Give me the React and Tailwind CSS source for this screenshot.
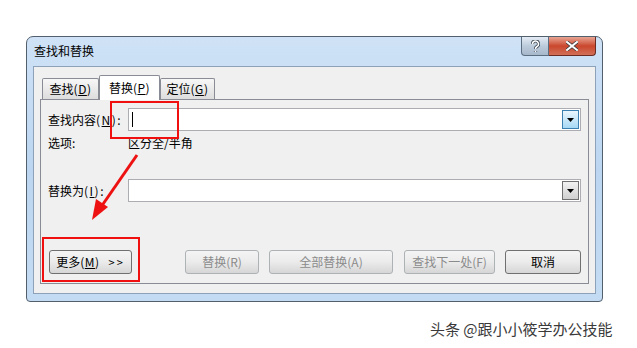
import React from 'react'

const cjk = { fontFamily: '"Noto Sans CJK SC", "Noto Sans", sans-serif' }

function Tab({ label, keyChar, active, w }) {
  return (
    <div
      className={
        (active
          ? 'relative z-10 -mb-px h-[25px] border border-b-0 border-[#898c95] bg-white '
          : 'mt-[3px] h-[21px] border border-b-0 border-[#898c95] bg-gradient-to-b from-[#f7f7f7] to-[#dddddd] ') +
        'flex items-center justify-center rounded-t-[2px] text-[12px] text-black ' +
        w
      }
    >
      {label}
      <span className="tracking-[0.5px]">
        (<span className="underline">{keyChar}</span>)
      </span>
    </div>
  )
}

function Combo({ focused }) {
  return (
    <div className="flex-1 h-[23px] border border-[#abadb3] bg-white flex items-center justify-between pl-[2px] pr-[1px]">
      <div className={focused ? 'h-[15px] w-px bg-black ml-[1px]' : ''} />
      <div
        className={
          focused
            ? 'h-[19px] w-[17px] border border-[#3c7fb1] bg-gradient-to-b from-[#eaf6fd] to-[#a7d9f5] flex items-center justify-center'
            : 'h-[19px] w-[17px] border border-[#707070] bg-gradient-to-b from-[#f2f2f2] to-[#d0d0d0] flex items-center justify-center'
        }
      >
        <svg width="7" height="4" viewBox="0 0 7 4">
          <path d="M0 0h7L3.5 4z" fill="#000" />
        </svg>
      </div>
    </div>
  )
}

function Btn({ children, disabled, className = '' }) {
  return (
    <div
      className={
        'h-[24px] rounded-[3px] border bg-gradient-to-b from-[#f4f4f4] via-[#ebebeb] to-[#d6d6d6] flex items-center justify-center text-[12px] ' +
        (disabled ? 'border-[#adb2b5] text-[#8b8b8b] ' : 'border-[#707070] text-black ') +
        className
      }
    >
      {children}
    </div>
  )
}

export default function App() {
  return (
    <div className="relative w-[637px] h-[348px] bg-white overflow-hidden pt-[36px] pl-[26px]" style={cjk}>
      <div className="w-[577px] h-[266px] border border-[#52606e] rounded-t-[7px] rounded-b-[4px] bg-gradient-to-b from-[#cfe2f6] via-[#bcd6f1] to-[#c4dcf3] flex flex-col">
        <div className="h-[29px] flex items-start justify-between pl-[7px] pr-[6px]">
          <div className="text-[12px] text-black pt-[5px]">查找和替换</div>
          <div className="flex">
            <div className="w-[28px] h-[19px] border border-[#5b6d80] border-t-0 rounded-bl-[4px] bg-gradient-to-b from-[#e4ecf5] via-[#bccbdb] to-[#a7b8cb] flex items-center justify-center">
              <svg width="9" height="13" viewBox="0 0 9 13">
                <path d="M1.5 4a3 3 0 1 1 4.2 2.7c-1 .6-1.2 1-1.2 2.3M4.5 11v1" stroke="#3d4a58" strokeWidth="3.2" fill="none" />
                <path d="M1.5 4a3 3 0 1 1 4.2 2.7c-1 .6-1.2 1-1.2 2.3M4.5 11v1" stroke="#fff" strokeWidth="1.6" fill="none" />
              </svg>
            </div>
            <div className="w-[47px] h-[19px] border border-[#6a2b22] border-t-0 border-l-0 rounded-br-[4px] bg-gradient-to-b from-[#e8a493] via-[#c9462c] to-[#d16f57] flex items-center justify-center">
              <svg width="12" height="10" viewBox="0 0 12 10">
                <path d="M1 1l10 8M11 1L1 9" stroke="#3a3a3a" strokeWidth="3.4" strokeLinecap="square" />
                <path d="M1 1l10 8M11 1L1 9" stroke="#fff" strokeWidth="2" strokeLinecap="square" />
              </svg>
            </div>
          </div>
        </div>
        <div className="mx-[6px] mb-[7px] flex-1 border border-[#8da2b8] bg-[#f0f0f0] px-[6px] pt-[8px] pb-[9px] flex flex-col">
          <div className="flex pl-[2px] items-end">
            <Tab label="查找" keyChar="D" w="w-[57px]" />
            <Tab label="替换" keyChar="P" active w="w-[61px]" />
            <Tab label="定位" keyChar="G" w="w-[55px]" />
          </div>
          <div className="flex-1 border border-[#898c95] bg-[#f0f0f0] px-[7px] pt-[8px] pb-[9px] flex flex-col">
            <div className="flex items-center gap-[6px]">
              <div className="w-[74px] text-[12px] text-black whitespace-nowrap">
                查找内容<span className="tracking-[1.5px]">(<span className="underline">N</span>):</span>
              </div>
              <Combo focused />
            </div>
            <div className="flex items-center mt-[2px] h-[20px] text-[12px] text-black">
              <div className="w-[80px]">选项:</div>
              <div>区分全/半角</div>
            </div>
            <div className="flex items-center gap-[6px] mt-[26px]">
              <div className="w-[74px] text-[12px] text-black whitespace-nowrap">
                替换为<span className="tracking-[1.5px]">(<span className="underline">I</span>):</span>
              </div>
              <Combo />
            </div>
            <div className="flex-1" />
            <div className="flex items-center pl-[1px]">
              <Btn className="w-[83px] gap-[9px]">
                <span>
                  更多<span className="tracking-[0.5px]">(<span className="underline">M</span>)</span>
                </span>
                <span className="text-[11px] tracking-[2px]">&gt;&gt;</span>
              </Btn>
              <Btn disabled className="w-[74px] ml-[53px]">替换(R)</Btn>
              <Btn disabled className="w-[124px] ml-[10px]">全部替换(A)</Btn>
              <Btn disabled className="w-[91px] ml-[11px]">查找下一处(F)</Btn>
              <Btn className="w-[76px] ml-[10px]">取消</Btn>
            </div>
          </div>
        </div>
      </div>

      <div className="absolute left-[430px] top-[318px] text-[15px] text-[#3a3a3a]">头条 @跟小小筱学办公技能</div>

      <div className="absolute left-[110px] top-[101px] w-[69px] h-[38px] border-2 border-[#f01010]" />
      <div className="absolute left-[42px] top-[237px] w-[98px] h-[45px] border-2 border-[#f01010]" />
      <svg className="absolute left-0 top-0" width="637" height="348" viewBox="0 0 637 348">
        <path d="M137 155L101 207" stroke="#ee1111" strokeWidth="3" />
        <path d="M92 220L96 199L108 207z" fill="#ee1111" />
      </svg>
    </div>
  )
}
